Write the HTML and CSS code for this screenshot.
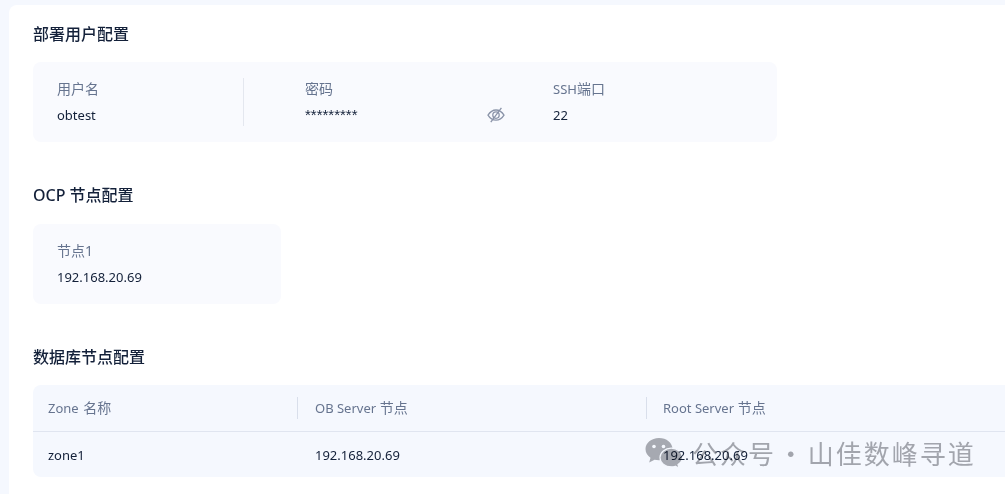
FILE: index.html
```html
<!DOCTYPE html>
<html lang="zh-CN">
<head>
<meta charset="utf-8">
<title>部署配置</title>
<link rel="stylesheet" href="styles.css">
</head>
<body>
<main class="card">
  <section class="section section-user">
    <h2 class="title">部署用户配置</h2>
    <div class="panel panel-user">
      <div class="field field-first">
        <div class="label">用户名</div>
        <div class="value">obtest</div>
      </div>
      <div class="field">
        <div class="label">密码</div>
        <div class="value value-row">
          <span class="stars">*********</span>
          <svg class="eye" viewBox="0 0 18 16" aria-hidden="true">
            <path d="M1 8.200C3 5 5.800 3 9 3S15 5 17 8.200C15 11.400 12.200 13.200 9 13.200S3 11.400 1 8.200Z"/>
            <circle cx="9" cy="8.100" r="3.200"/>
            <path d="M3.800 15.200 14.400 .8"/>
          </svg>
        </div>
      </div>
      <div class="field">
        <div class="label"><span class="latin">SSH</span>端口</div>
        <div class="value">22</div>
      </div>
    </div>
  </section>

  <section class="section section-ocp">
    <h2 class="title">OCP 节点配置</h2>
    <div class="panel panel-ocp">
      <div class="field">
        <div class="label">节点1</div>
        <div class="value">192.168.20.69</div>
      </div>
    </div>
  </section>

  <section class="section section-db">
    <h2 class="title">数据库节点配置</h2>
    <div class="table">
      <div class="row row-head">
        <div class="cell cell-zone"><span class="latin latin-zone">Zone</span> 名称</div>
        <div class="cell cell-ob"><span class="latin">OB Server</span> 节点</div>
        <div class="cell cell-root"><span class="latin">Root Server</span> 节点</div>
      </div>
      <div class="row row-body">
        <div class="cell cell-zone">zone1</div>
        <div class="cell cell-ob">192.168.20.69</div>
        <div class="cell cell-root">192.168.20.69</div>
      </div>
    </div>
  </section>
</main>

<div class="watermark">
  <svg class="wechat" viewBox="0 0 38 30" aria-hidden="true">
    <path class="bubble" d="M14 0C6.300 0 .5 5 .5 11c0 3.700 2 6.700 5 8.800L4.200 24.500l5.300-2.800c1.400.3 3 .5 4.500.5 7.500 0 13.500-5 13.500-11.200S21.500 0 14 0Z"/>
    <circle class="dot" cx="9" cy="8.500" r="1.800"/>
    <circle class="dot" cx="18.500" cy="8.500" r="1.800"/>
    <path class="bubble bubble-front" d="M37.500 19.500c0-5-5-9.300-11.200-9.300-6.300 0-11.300 4.300-11.300 9.300 0 5.200 5 9.300 11.300 9.300 1.300 0 2.700-.2 3.900-.6l3.800 1.800-1-3.500c2.900-1.800 4.500-4.300 4.500-7Z"/>
  </svg>
  <span class="wm-text">公众号 · 山佳数峰寻道</span>
</div>
</body>
</html>
```
FILE: styles.css
```css
* { box-sizing: border-box; }

html, body {
  margin: 0;
  height: 494px;
  overflow: hidden;
}

body {
  position: relative;
  background: #f5f8fe;
  padding: 5px 0 0 9px;
  font-family: "Noto Sans", "Noto Sans CJK SC", sans-serif;
  font-size: 14px;
  color: #132039;
}

.card {
  width: 996px;
  height: 489px;
  overflow: hidden;
  background: #fff;
  border-radius: 8px 0 0 0;
  padding: 17px 0 0 24px;
}

.title {
  margin: 0;
  font-size: 16px;
  line-height: 24px;
  font-weight: 500;
  color: #132039;
}

.section-ocp { margin-top: 41px; }
.section-db { margin-top: 41px; }

.panel {
  margin-top: 16px;
  height: 80px;
  background: #f9fafe;
  border-radius: 8px;
  padding: 16px 0 0 24px;
  display: flex;
}

.section-ocp .panel { margin-top: 17px; }

.panel-user { width: 744px; }
.panel-ocp { width: 248px; }

.field { flex: 0 0 248px; }

.field-first { position: relative; }

.field-first::after {
  content: "";
  position: absolute;
  top: 0;
  left: 186px;
  width: 1px;
  height: 48px;
  background: #e4e7ef;
}

.label {
  line-height: 22px;
  color: #66748f;
}

.latin { font-size: 13px; }
.latin-zone { margin-right: 1px; }

.value {
  margin-top: 4px;
  line-height: 22px;
  font-size: 13px;
  color: #132039;
}

.value-row {
  display: flex;
  align-items: center;
  justify-content: space-between;
  width: 200px;
}

.stars {
  font-family: "Liberation Sans", sans-serif;
  font-size: 15px;
  line-height: 22px;
}

.eye {
  width: 18px;
  height: 16px;
  fill: none;
  stroke: #8b94a9;
  stroke-width: 1.300;
}

.table {
  margin-top: 16px;
  width: 1000px;
  height: 92px;
  background: #f5f8fe;
  border-radius: 8px;
  overflow: hidden;
}

.row { display: flex; align-items: center; }

.row-head {
  height: 47px;
  border-bottom: 1px solid #e0e5f0;
  color: #66748f;
}

.row-body { height: 45px; font-size: 13px; }

.cell {
  position: relative;
  line-height: 22px;
  padding-left: 15px;
}

.cell-zone { width: 264px; }
.cell-ob { width: 349px; padding-left: 18px; }
.cell-root { padding-left: 17px; }

.row-head .cell-ob::before,
.row-head .cell-root::before {
  content: "";
  position: absolute;
  left: 0;
  top: 0;
  width: 1px;
  height: 22px;
  background: #d9dfeb;
}

.watermark {
  position: absolute;
  left: 645px;
  top: 438px;
  display: flex;
  align-items: center;
  gap: 9px;
  color: #a9aaae;
  mix-blend-mode: multiply;
}

.wechat { width: 38px; height: 30px; }

.bubble { fill: #adaeb2; }
.bubble-front { stroke: #ffffff; stroke-width: 1.200; }
.dot { fill: #ffffff; }

.wm-text {
  font-family: "Noto Sans CJK SC", sans-serif;
  font-size: 26px;
  letter-spacing: 2px;
  word-spacing: -6px;
  line-height: 30px;
  white-space: nowrap;
}
```
